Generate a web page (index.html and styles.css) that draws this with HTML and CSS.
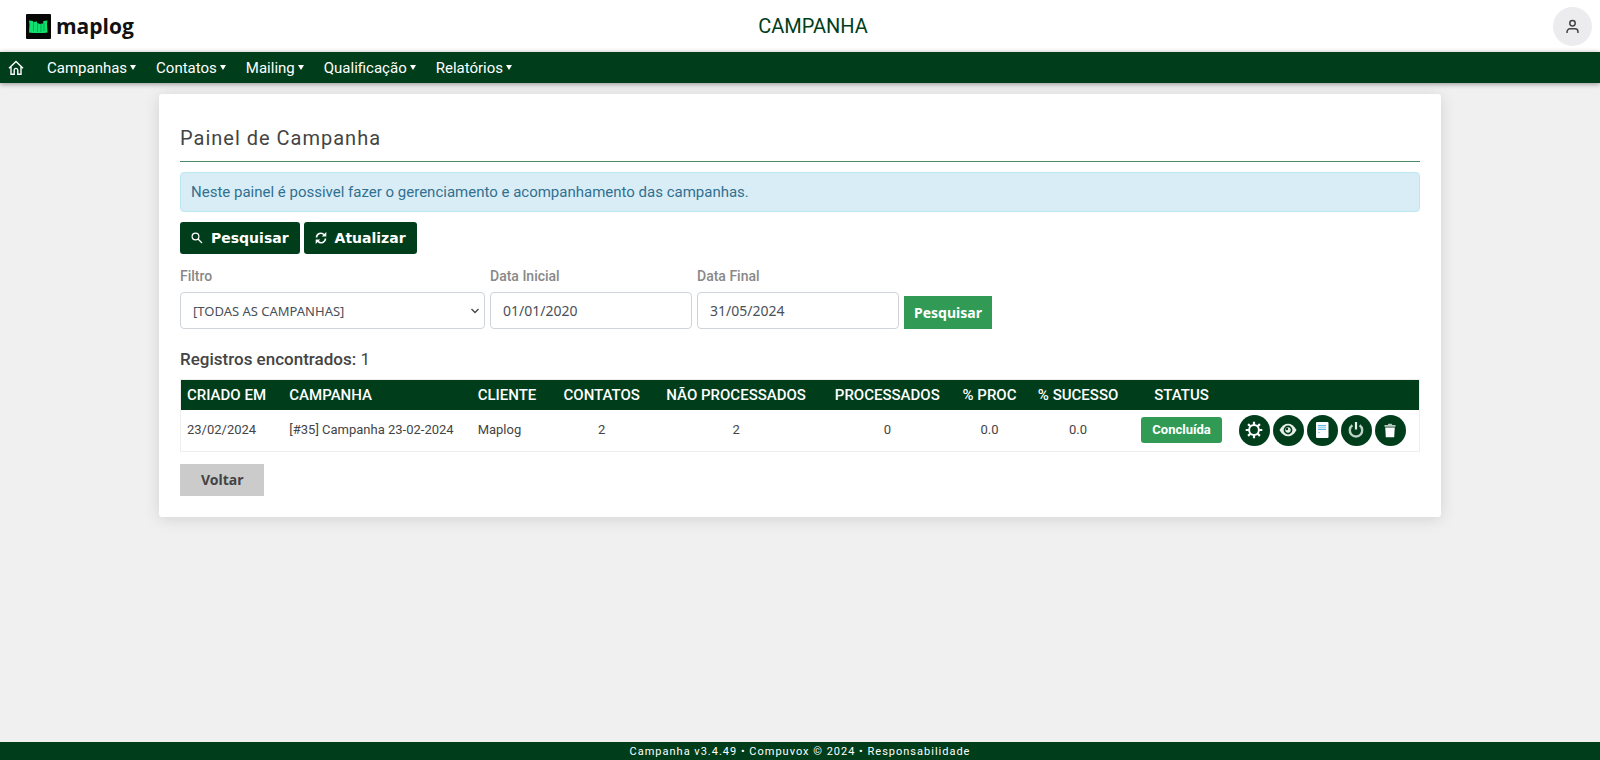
FILE: index.html
```html
<!DOCTYPE html>
<html lang="pt-BR">
<head>
<meta charset="utf-8">
<title>Campanha</title>
<meta name="viewport" content="width=device-width, initial-scale=1">
<link rel="stylesheet" href="styles.css">
</head>
<body>
<header class="topbar">
  <a class="logo" href="#">
    <svg class="logo-mark" viewBox="0 0 25 25" aria-hidden="true"><rect width="25" height="25" rx="1" fill="#050805"/><path d="M3 6.500l4 .5v1l4-.5v1.500l3 1 3-.5.500-2.500 4-.5-.5 3 .5 9-3.500.5h-11l-4-.5.5-8z" fill="#10e070"/><path d="M7.500 8v9M11.500 9.500V18M15 9.500V18M18 8.500V17" stroke="#07903f" stroke-width=".7"/></svg>
    <span>maplog</span>
  </a>
  <h1 class="app-title">CAMPANHA</h1>
  <button class="avatar" type="button" aria-label="Usuário">
    <svg viewBox="0 0 16 16" aria-hidden="true"><circle cx="8" cy="4.500" r="2.900"/><path d="M2.200 15v-1.500a3 3 0 0 1 3-3h5.600a3 3 0 0 1 3 3V15"/></svg>
  </button>
</header>
<nav class="menu">
  <a class="home" href="#" aria-label="Início"><svg viewBox="0 0 16 16" aria-hidden="true"><path d="M1 8.200 8 1.500l7 6.700M3 6.500v7.700h3.200v-4a1.800 1.800 0 0 1 3.600 0v4H13V6.500"/></svg></a>
  <a href="#">Campanhas<i class="caret"></i></a>
  <a href="#">Contatos<i class="caret"></i></a>
  <a href="#">Mailing<i class="caret"></i></a>
  <a href="#">Qualificação<i class="caret"></i></a>
  <a href="#">Relatórios<i class="caret"></i></a>
</nav>
<main class="panel">
  <h2 class="panel-title">Painel de Campanha</h2>
  <p class="notice">Neste painel é possivel fazer o gerenciamento e acompanhamento das campanhas.</p>
  <div class="toolbar">
    <button class="tool" type="button"><svg viewBox="0 0 12 12" aria-hidden="true"><circle cx="4.500" cy="4.500" r="3.400"/><path d="M7 7l4 4"/></svg>Pesquisar</button>
    <button class="tool" type="button"><svg class="bold" viewBox="0 0 12 12" aria-hidden="true"><path d="M1.500 5.500A4.400 4.400 0 0 1 9 2.600M10.500 6.500A4.400 4.400 0 0 1 3 9.400"/><path d="M11.300 0v4.500H6.800zM.7 12V7.500h4.500z" fill="#fff" stroke="none"/></svg>Atualizar</button>
  </div>
  <form class="filters">
    <div class="field field-wide">
      <label for="filtro">Filtro</label>
      <div class="select-box">
        <select id="filtro"><option>[TODAS AS CAMPANHAS]</option></select>
        <svg viewBox="0 0 8 6" aria-hidden="true"><path d="M.5 1L4 4.500 7.500 1"/></svg>
      </div>
    </div>
    <div class="field"><label for="ini">Data Inicial</label><input id="ini" type="text" value="01/01/2020"></div>
    <div class="field"><label for="fim">Data Final</label><input id="fim" type="text" value="31/05/2024"></div>
    <button class="search" type="button">Pesquisar</button>
  </form>
  <p class="count">Registros encontrados: <span>1</span></p>
  <table class="grid">
    <colgroup><col class="c-date"><col class="c-name"><col class="c-client"><col class="c-contacts"><col class="c-pending"><col class="c-done"><col class="c-proc"><col class="c-success"><col class="c-status"><col class="c-actions"></colgroup>
    <thead>
      <tr><th class="left">CRIADO EM</th><th class="left">CAMPANHA</th><th class="left">CLIENTE</th><th>CONTATOS</th><th>NÃO PROCESSADOS</th><th>PROCESSADOS</th><th>% PROC</th><th>% SUCESSO</th><th>STATUS</th><th></th></tr>
    </thead>
    <tbody>
      <tr>
        <td class="left">23/02/2024</td><td class="left">[#35] Campanha 23-02-2024</td><td class="left">Maplog</td><td>2</td><td>2</td><td>0</td><td>0.0</td><td>0.0</td>
        <td><span class="status">Concluída</span></td>
        <td>
          <div class="actions">
            <button type="button" aria-label="Configurar"><svg viewBox="0 0 18 18" aria-hidden="true"><circle cx="9" cy="9" r="4.900" fill="none" stroke="#fff" stroke-width="2"/><path d="M9 .7v3M9 14.300v3M.7 9h3M14.300 9h3M3.100 3.100l2.200 2.200M12.700 12.700l2.200 2.200M3.100 14.900l2.200-2.200M12.700 5.300l2.200-2.200" stroke="#fff" stroke-width="2.200"/></svg></button>
            <button type="button" aria-label="Visualizar"><svg viewBox="0 0 18 18" aria-hidden="true"><path d="M.5 9C3 4.500 5.800 2.700 9 2.700S15 4.500 17.500 9C15 13.500 12.200 15.300 9 15.300S3 13.500.5 9z" fill="#e6efe8"/><circle cx="9" cy="9" r="4.400" fill="#003d1b"/><circle cx="9" cy="9" r="2.700" fill="#e6efe8"/><circle cx="8" cy="8" r="1.200" fill="#003d1b"/></svg></button>
            <button type="button" aria-label="Relatório"><svg viewBox="0 0 18 18" aria-hidden="true"><rect x="3" y="1" width="12.500" height="16" rx="1" fill="#fff"/><path d="M5 4.700h8M5 8.300h8" stroke="#62b8e2" stroke-width="1.200"/><path d="M5 6.500h8M5 11.500h2" stroke="#a5d8ef" stroke-width="1.200"/></svg></button>
            <button type="button" aria-label="Desligar"><svg viewBox="0 0 18 18" aria-hidden="true"><path d="M5.400 4.300a6.200 6.200 0 1 0 7.200 0" fill="none" stroke="#bfd0c5" stroke-width="2.400"/><path d="M9 1v7.500" stroke="#e6efe8" stroke-width="2.200"/></svg></button>
            <button type="button" aria-label="Excluir"><svg viewBox="0 0 18 18" aria-hidden="true"><path d="M3.500 4h3.200l.7-1.300h3.200l.7 1.300h3.200v1.700h-11z" fill="#b9cbbf"/><path d="M4.200 6.500h9.600l-.6 9.700H4.800z" fill="#fff"/></svg></button>
          </div>
        </td>
      </tr>
    </tbody>
  </table>
  <button class="back" type="button">Voltar</button>
</main>
<footer class="footer">Campanha v3.4.49 • Compuvox © 2024 • Responsabilidade</footer>
</body>
</html>
```
FILE: styles.css
```css
* { box-sizing: border-box; }
html, body { height: 100%; }
body {
  margin: 0;
  display: flex;
  flex-direction: column;
  background: #f0f0f0;
  color: #444;
  font: 14px/20px Roboto, sans-serif;
}
a { color: inherit; text-decoration: none; }
h1, h2, p { margin: 0; font-weight: 400; }
button { border: 0; font: inherit; cursor: pointer; }

.topbar {
  display: grid;
  grid-template-columns: 1fr auto 1fr;
  align-items: center;
  height: 52px;
  padding: 0 8px 0 26px;
  background: #fff;
}
.logo {
  display: flex;
  align-items: center;
  gap: 5px;
  color: #111;
  font: 700 21px/24px "Open Sans", sans-serif;
}
.logo-mark { width: 25px; height: 25px; }
.app-title { margin-left: 8px; color: #003d1b; font-size: 20px; line-height: 24px; }
.avatar {
  display: grid;
  place-items: center;
  justify-self: end;
  width: 39px;
  height: 39px;
  padding: 0;
  border-radius: 50%;
  background: #ececee;
}
.avatar svg { width: 15px; height: 15px; fill: none; stroke: #444; stroke-width: 1.6; }

.menu {
  display: flex;
  align-items: center;
  gap: 20px;
  height: 31px;
  padding: 0 8px;
  background: #003d1b;
  color: #fff;
  font-size: 15px;
  box-shadow: 0 1px 5px rgba(0, 0, 0, .4);
}
.menu a { display: flex; align-items: center; gap: 3px; }
.menu .home { margin-right: 3px; }
.home svg { width: 16px; height: 16px; fill: none; stroke: #fff; stroke-width: 1.4; }
.caret {
  border: 3px solid transparent;
  border-top: 5px solid #fff;
  border-bottom: 0;
}

.panel {
  width: calc(80% + 2px);
  margin: 11px auto auto;
  padding: 32px 21px 21px;
  border-radius: 3px;
  background: #fff;
  box-shadow: 0 2px 16px rgba(0, 0, 0, .12);
}
.panel-title {
  padding-bottom: 11px;
  border-bottom: 1px solid #4d8a66;
  font-size: 20px;
  line-height: 24px;
  letter-spacing: 1px;
}
.notice {
  margin-top: 10px;
  padding: 9px 10px;
  border: 1px solid #bce8f1;
  border-radius: 4px;
  background: #d9edf7;
  color: #31708f;
  font-size: 15px;
}
.toolbar { display: flex; gap: 4px; margin-top: 10px; }
.tool {
  display: flex;
  align-items: center;
  gap: 8px;
  height: 32px;
  padding: 0 11px;
  border-radius: 3px;
  background: #003d1b;
  color: #fff;
  font: 700 14px/20px "DejaVu Sans", sans-serif;
}
.tool svg { width: 12px; height: 12px; fill: none; stroke: #fff; stroke-width: 1.2; }
.tool .bold { stroke-width: 1.6; }

.filters { display: flex; align-items: flex-end; gap: 5px; margin-top: 12px; }
.field { flex: 0 1 202px; }
.field-wide { flex-basis: 305px; }
.field label { display: block; margin-bottom: 6px; color: #888; font-weight: 500; }
.field input, .field select {
  display: block;
  width: 100%;
  height: 37px;
  padding: 0 12px;
  border: 1px solid #ced4da;
  border-radius: 4px;
  background: #fff;
  color: #495057;
  font: 14px/20px "Noto Sans", sans-serif;
}
.field select { appearance: none; font-size: 13px; }
.select-box { position: relative; }
.select-box svg {
  position: absolute;
  right: 6px;
  top: 16px;
  width: 8px;
  height: 6px;
  fill: none;
  stroke: #444;
  stroke-width: 1.3;
  pointer-events: none;
}
.search {
  height: 33px;
  padding: 0 10px;
  background: #319b55;
  color: #fff;
  font: 700 14px/20px "Noto Sans", sans-serif;
}

.count { margin: 20px 0 10px; font-size: 17px; font-weight: 500; }
.count span { font-weight: 400; }
.grid {
  width: 100%;
  table-layout: fixed;
  border-collapse: collapse;
  border: 1px solid #eee;
}
.grid thead { background: #003d1b; color: #fff; }
.grid th { height: 30px; padding: 0; font-size: 15px; font-weight: 500; white-space: nowrap; }
.grid td { height: 42px; padding: 0; font-size: 13px; text-align: center; white-space: nowrap; }
.grid .left { padding-left: 6px; text-align: left; }
.c-date { width: 8.3%; }
.c-name { width: 15.2%; }
.c-client { width: 6.2%; }
.c-contacts { width: 8.6%; }
.c-pending { width: 13.1%; }
.c-done { width: 11.3%; }
.c-proc { width: 5.2%; }
.c-success { width: 9.1%; }
.c-status { width: 7.6%; }
.c-actions { width: 15.4%; }
.status {
  display: inline-block;
  padding: 3px 11px;
  border-radius: 3px;
  background: #319b55;
  color: #fff;
  font-weight: 700;
}
.actions { display: flex; gap: 3px; padding-left: 10px; }
.actions button {
  display: grid;
  place-items: center;
  width: 31px;
  height: 31px;
  padding: 0;
  border-radius: 50%;
  background: #003d1b;
}
.actions svg { width: 18px; height: 18px; }
.back {
  display: block;
  height: 32px;
  margin-top: 12px;
  padding: 0 21px;
  background: #cbcbcb;
  color: #444;
  font: 700 14px/20px "Noto Sans", sans-serif;
}
.footer {
  height: 18px;
  background: #003d1b;
  color: #fff;
  font-size: 11px;
  line-height: 20px;
  letter-spacing: 1px;
  text-align: center;
}
```
